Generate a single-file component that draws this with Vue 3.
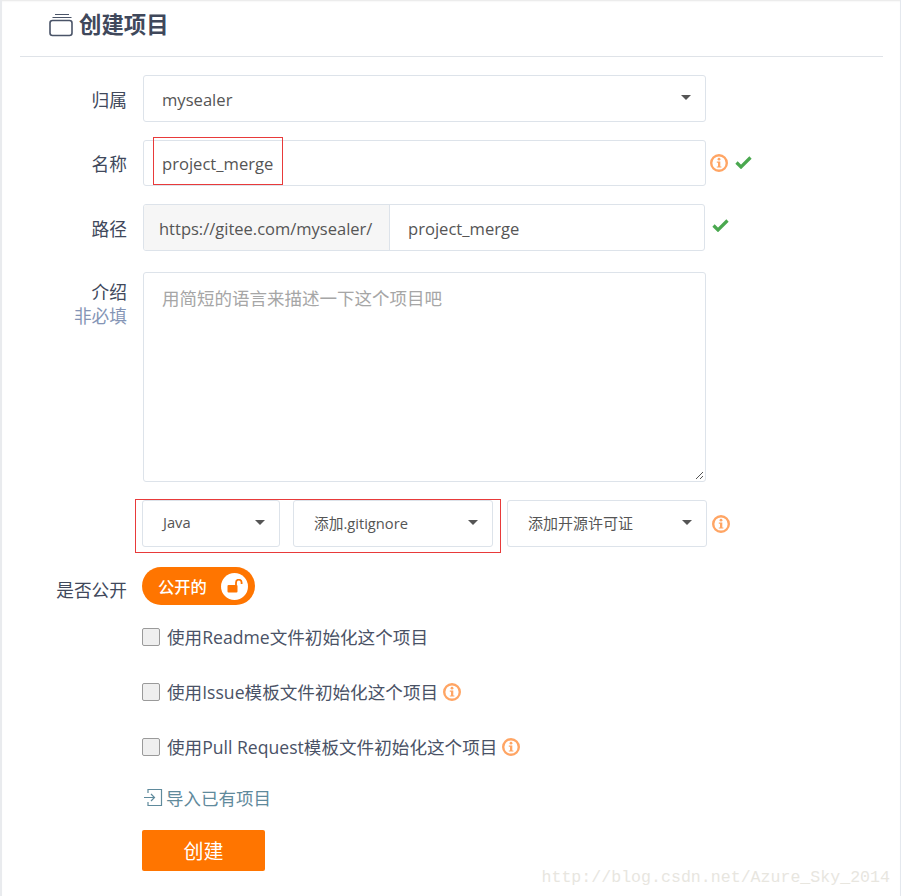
<script setup>
const checks = [
  { text: '使用Readme文件初始化这个项目', info: false },
  { text: '使用Issue模板文件初始化这个项目', info: true },
  { text: '使用Pull Request模板文件初始化这个项目', info: true }
]
</script>

<template>
  <div class="page">
    <header class="head">
      <svg class="head-icon" width="26" height="24" viewBox="0 0 26 24" fill="none" stroke="#4a5468">
        <path d="M6 1.5h14M3.5 4.5h19" stroke-width="1.2" />
        <rect x="1" y="7.5" width="22" height="15" rx="2.5" stroke-width="1.6" />
      </svg>
      <h1>创建项目</h1>
    </header>
    <form class="form" @submit.prevent>
      <div class="row r1">
        <label>归属</label>
        <div class="select wide"><span>mysealer</span><i class="caret"></i></div>
      </div>
      <div class="row r2">
        <label>名称</label>
        <div class="input wide">project_merge</div>
        <svg class="info first" width="18" height="18" viewBox="0 0 18 18"><use href="#info-glyph" /></svg>
        <svg class="check" width="17" height="14" viewBox="0 0 17 14"><path d="M1.5 7.5l4.5 4.5 9.5-9.5" fill="none" stroke="#4aa84f" stroke-width="3.2" /></svg>
      </div>
      <div class="row r3">
        <label>路径</label>
        <div class="path">
          <span class="addon">https://gitee.com/mysealer/</span>
          <span class="path-input">project_merge</span>
        </div>
        <svg class="check path-check" width="17" height="14" viewBox="0 0 17 14"><path d="M1.5 7.5l4.5 4.5 9.5-9.5" fill="none" stroke="#4aa84f" stroke-width="3.2" /></svg>
      </div>
      <div class="row r4">
        <label class="two"><span>介绍</span><small>非必填</small></label>
        <div class="textarea">
          用简短的语言来描述一下这个项目吧
          <svg class="grip" width="9" height="9" viewBox="0 0 9 9"><path d="M1 8l7-7M5 8l3-3" stroke="#555" stroke-width="1" /></svg>
        </div>
      </div>
      <div class="row r5">
        <label></label>
        <div class="select small java"><span>Java</span><i class="caret"></i></div>
        <div class="select small ignore"><span>添加.gitignore</span><i class="caret"></i></div>
        <div class="select small license"><span>添加开源许可证</span><i class="caret"></i></div>
        <svg class="info" width="18" height="18" viewBox="0 0 18 18"><use href="#info-glyph" /></svg>
      </div>
      <div class="row r6">
        <label>是否公开</label>
        <div class="switch">
          <span>公开的</span>
          <span class="knob">
            <svg width="16" height="14" viewBox="0 0 16 14">
              <path d="M9 6V3.5a2.8 2.8 0 0 1 5.6 0V5" fill="none" stroke="#ff7500" stroke-width="1.8" />
              <rect x="0.5" y="6" width="10" height="7.5" rx="1" fill="#ff7500" />
            </svg>
          </span>
        </div>
      </div>
      <div v-for="c in checks" :key="c.text" class="row check-row">
        <label></label>
        <span class="box"></span>
        <span class="check-text">{{ c.text }}</span>
        <svg v-if="c.info" class="info" width="18" height="18" viewBox="0 0 18 18"><use href="#info-glyph" /></svg>
      </div>
      <div class="row r7">
        <label></label>
        <svg width="20" height="19" viewBox="0 0 20 19" fill="none" stroke="#5f8a9c" stroke-width="1.2">
          <path d="M5 5V1.5h13.5v16H5V14" />
          <path d="M1 9.5h10M8 6l3.5 3.5L8 13" />
        </svg>
        <a class="import">导入已有项目</a>
      </div>
      <div class="row r8">
        <label></label>
        <button type="button" class="submit">创建</button>
      </div>
    </form>

    <svg class="defs" width="0" height="0">
      <defs>
        <g id="info-glyph">
          <circle cx="9" cy="9" r="7.8" fill="none" stroke="#ffa564" stroke-width="2.4" />
          <circle cx="9" cy="5.2" r="1.4" fill="#ffa564" />
          <path d="M6.8 7.6h3.5v4.8h1.1v1.2H6.8v-1.2H8V8.8H6.8z" fill="#ffa564" />
        </g>
      </defs>
    </svg>

    <div class="mark one"></div>
    <div class="mark two-box"></div>
    <div class="watermark">http://blog.csdn.net/Azure_Sky_2014</div>
  </div>
</template>

<style>
html, body { margin: 0; background: #fff; }
</style>

<style scoped>
.page {
  position: relative;
  width: 901px;
  height: 896px;
  box-sizing: border-box;
  overflow: hidden;
  background: #fff;
  font-family: "Open Sans", "Noto Sans CJK SC", sans-serif;
  font-size: 16.6px;
  color: #40485b;
  border-left: 2px solid #e9ebee;
  border-right: 1px solid #e4e8ee;
  box-shadow: inset 0 2px 2px -1px #e6e6e6;
}
.head {
  display: flex;
  align-items: center;
  box-sizing: border-box;
  height: 57px;
  margin: 0 17px 0 18px;
  padding: 0 0 7px 29px;
  border-bottom: 1px solid #dfe3e8;
}
.head-icon { margin-right: 4px; }
.head h1 {
  margin: 0;
  font-size: 22.4px;
  font-weight: 700;
  color: #40485b;
  line-height: 28px;
}
.form { padding-top: 18px; }
.row { display: flex; align-items: center; }
.row > label {
  flex: none;
  width: 125px;
  margin-right: 16px;
  text-align: right;
  font-size: 17.7px;
  color: #40485b;
}
.r1 { height: 47px; margin-bottom: 18px; }
.r2 { height: 46px; margin-bottom: 18px; }
.r3 { height: 47px; margin-bottom: 21px; }
.r4 { height: 210px; margin-bottom: 18px; align-items: flex-start; }
.r5 { height: 47px; margin-bottom: 20px; }
.r6 { height: 38px; margin-bottom: 18px; }
.r6 > label { padding-top: 5px; }
.check-row { height: 28px; margin-bottom: 27px; }
.r7 { height: 26px; margin-top: -3px; margin-bottom: 19px; }
.r8 { height: 41px; }
.select, .input, .path, .textarea {
  box-sizing: border-box;
  border: 1px solid #dde3ea;
  border-radius: 3px;
  background: #fff;
}
.select {
  position: relative;
  display: flex;
  align-items: center;
  height: 47px;
  padding-left: 18px;
  padding-top: 1px;
  color: #555;
}
.wide { width: 563px; }
.input {
  display: flex;
  align-items: center;
  height: 46px;
  padding-left: 18px;
  padding-top: 1px;
  color: #555;
}
.caret {
  position: absolute;
  right: 14px;
  top: 19px;
  width: 0;
  height: 0;
  border-left: 5px solid transparent;
  border-right: 5px solid transparent;
  border-top: 5px solid #555;
}
.info { flex: none; margin-left: 4px; }
.info.first { margin-left: 4px; }
.check { flex: none; margin-left: 7px; margin-top: -2px; }
.path-check { margin-left: 7px; margin-top: -6px; }
.path {
  display: flex;
  width: 562px;
  height: 47px;
  overflow: hidden;
}
.addon {
  flex: none;
  box-sizing: border-box;
  width: 246px;
  display: flex;
  align-items: center;
  padding-left: 15px;
  padding-top: 1px;
  background: #f6f6f6;
  border-right: 1px solid #dde3ea;
  color: #555;
  font-size: 16.5px;
}
.path-input {
  display: flex;
  align-items: center;
  padding-left: 18px;
  padding-top: 1px;
  color: #555;
}
.row > .two { display: flex; flex-direction: column; line-height: 24px; padding-top: 8px; }
.two small { font-size: 17.7px; color: #8494b5; }
.textarea {
  position: relative;
  width: 563px;
  height: 210px;
  padding: 13px 18px;
  color: #a6a6a6;
  font-size: 17.5px;
  line-height: 24px;
}
.grip { position: absolute; right: 1px; bottom: 1px; }
.small { font-size: 14.7px; padding-left: 20px; padding-top: 0; padding-bottom: 3px; }
.java { width: 138px; margin-left: -1px; }
.ignore { width: 200px; margin-left: 13px; }
.license { width: 200px; margin-left: 14px; font-size: 15px; }
.r5 .info { margin-left: 5px; }
.switch {
  display: flex;
  align-items: center;
  box-sizing: border-box;
  width: 113px;
  height: 38px;
  margin-left: -1px;
  padding: 0 7px 0 16px;
  justify-content: space-between;
  border-radius: 19px;
  background: #ff7500;
  color: #fff;
  font-size: 16.3px;
  font-weight: 500;
}
.knob {
  display: flex;
  align-items: center;
  justify-content: center;
  width: 27px;
  height: 27px;
  border-radius: 50%;
  background: #fff;
}
.box {
  flex: none;
  box-sizing: border-box;
  width: 18px;
  height: 18px;
  margin-left: -1px;
  margin-right: 7px;
  border: 1px solid #9a9a9a;
  border-radius: 2px;
  background: #efefef;
}
.check-text { color: #4a5266; font-size: 17.6px; padding-bottom: 2px; }
.check-row .info { margin-left: 5px; }
.r7 svg { margin-right: 3px; flex: none; margin-top: -2px; }
.import { color: #5f8a9c; font-size: 17.5px; padding-bottom: 2px; }
.submit {
  width: 123px;
  height: 41px;
  margin-left: -1px;
  border: 0;
  border-radius: 2px;
  background: #ff7500;
  color: #fff;
  font-family: inherit;
  font-size: 20px;
  padding: 0;
}
.defs { position: absolute; }
.mark { position: absolute; box-sizing: border-box; border: 1px solid #e83a3a; pointer-events: none; }
.mark.one { left: 151px; top: 137px; width: 130px; height: 48px; }
.mark.two-box { left: 133px; top: 499px; width: 366px; height: 54px; }
.watermark {
  position: absolute;
  right: 10px;
  bottom: 8px;
  font-family: "Liberation Mono", monospace;
  font-size: 16.6px;
  line-height: 20px;
  color: #e8e6df;
}
</style>
